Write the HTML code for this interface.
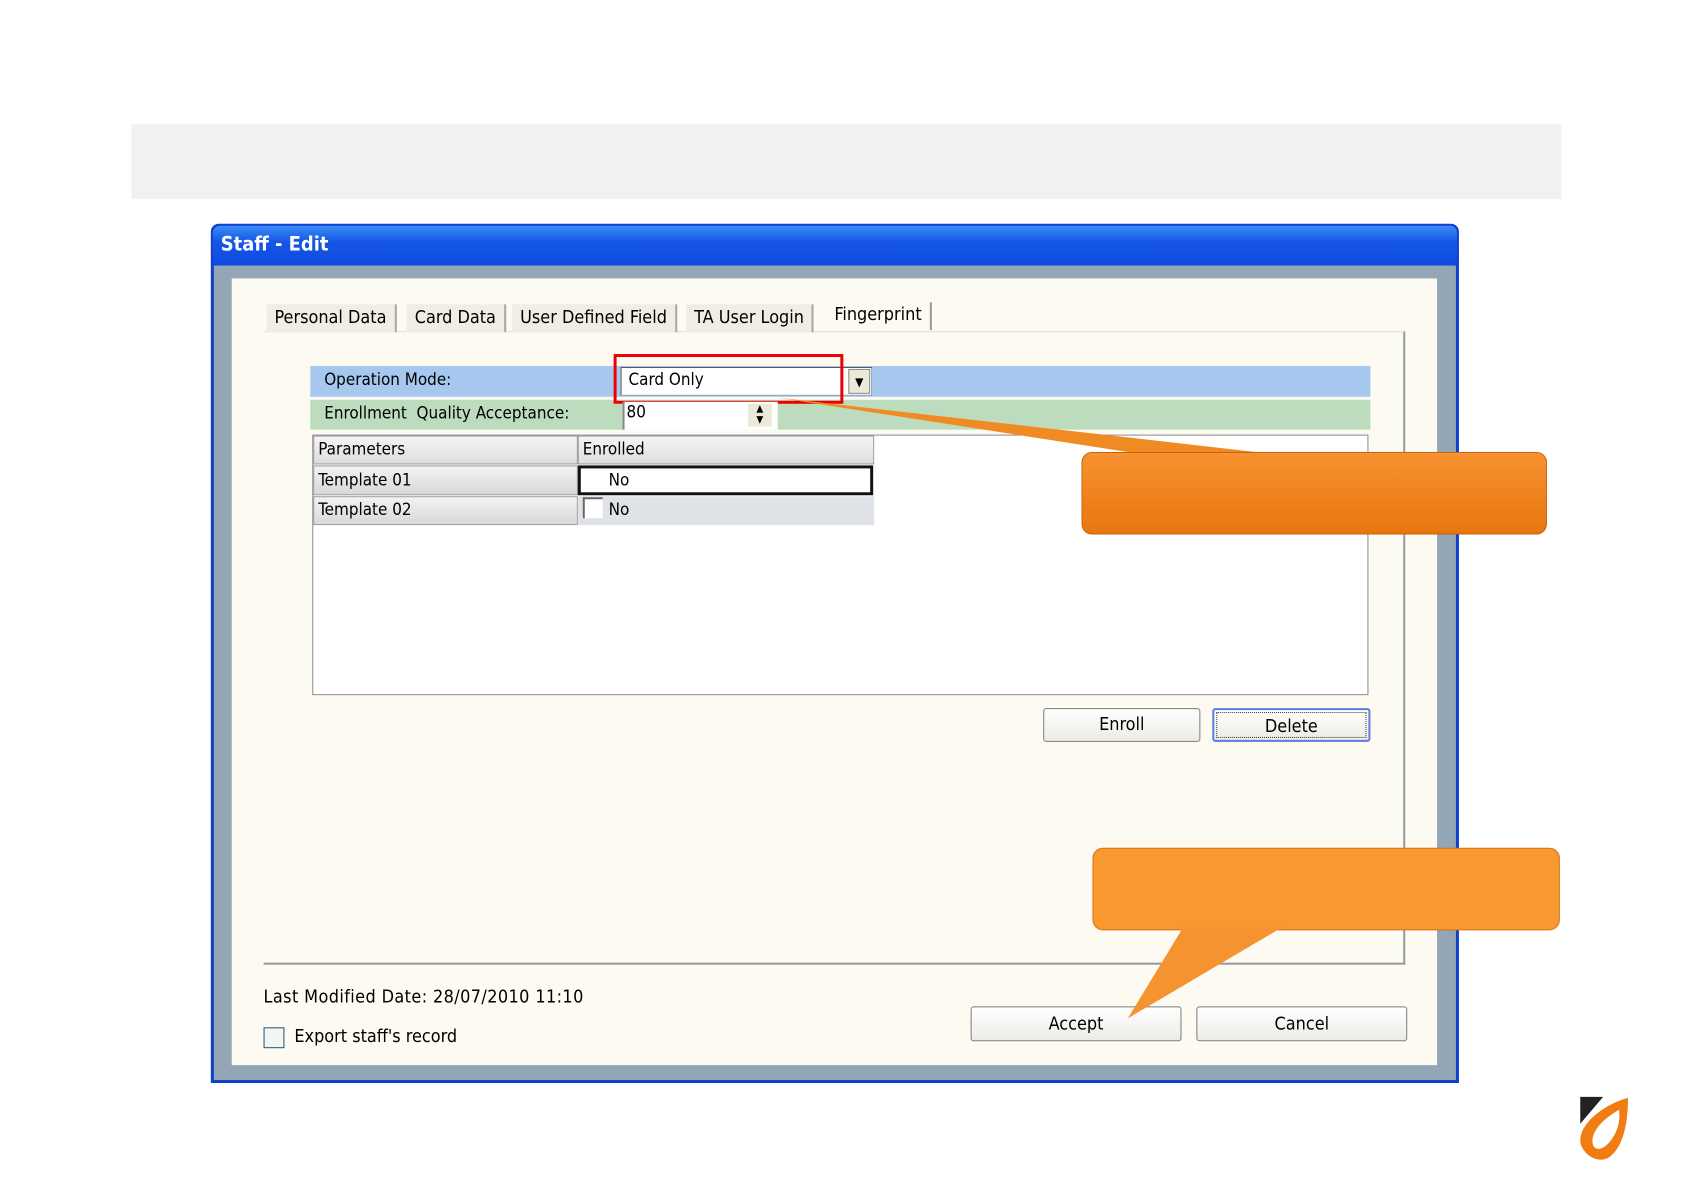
<!DOCTYPE html>
<html><head><meta charset="utf-8"><style>
*{margin:0;padding:0;box-sizing:border-box}
body{width:1684px;height:1191px;background:#fff;position:relative;overflow:hidden;font-family:"DejaVu Sans Condensed","Liberation Sans",sans-serif;font-size:17px;color:#000}
#w{position:absolute;left:0;top:0;width:1684px;height:1191px;transform:scale(0.9945);transform-origin:0 0}
.a{position:absolute}
.btn{position:absolute;border:1px solid #7a7a7a;border-radius:3px;background:linear-gradient(#fff,#ecebe6);text-align:center;font-size:18px}
.tab{position:absolute;top:306px;height:28px;font-size:18px;line-height:28px;border-right:2px solid #a8a8a0;padding:0 8px}
</style></head><body><div id="w">
<div class="a" style="left:132px;top:125px;width:1438px;height:75px;background:#f1f1f1"></div>
<div class="a" style="left:212px;top:225px;width:1255px;height:864px;background:#0f3fd0;border-radius:8px 8px 0 0"></div>
<div class="a" style="left:214px;top:227px;width:1251px;height:40px;background:linear-gradient(#3a8cf6,#1656e6 40%,#0d4be0);border-radius:7px 7px 0 0"></div>
<div class="a" style="left:222px;top:233px;color:#fff;font-weight:bold;font-size:20px">Staff - Edit</div>
<div class="a" style="left:215px;top:267px;width:1249px;height:819px;background:#93a6b6"></div>
<div class="a" style="left:233px;top:280px;width:1212px;height:791px;background:#fcfaf1"></div>
<div class="a" style="left:265px;top:333px;width:1148px;height:637px;border-right:2px solid #919b9c;border-bottom:2px solid #919b9c;border-top:1px solid #e0ddd0"></div>
<div class="tab" style="left:268px;background:#f0eee4">Personal Data</div>
<div class="tab" style="left:409px;background:#f0eee4">Card Data</div>
<div class="tab" style="left:515px;background:#f0eee4">User Defined Field</div>
<div class="tab" style="left:690px;background:#f0eee4">TA User Login</div>
<div class="tab" style="left:831px;top:304px;background:#fcfaf1;border-right:2px solid #919b9c;line-height:26px">Fingerprint</div>
<div class="a" style="left:312px;top:368px;width:1066px;height:31px;background:#a6c8ee"></div>
<div class="a" style="left:326px;top:372px">Operation Mode:</div>
<div class="a" style="left:312px;top:402px;width:1066px;height:30px;background:#bddcbd"></div>
<div class="a" style="left:326px;top:406px">Enrollment&nbsp; Quality Acceptance:</div>
<div class="a" style="left:624px;top:369px;width:253px;height:29px;background:#fff;border:1px solid #7f9db9;border-top-color:#555;border-left-color:#555"></div>
<div class="a" style="left:632px;top:372px">Card Only</div>
<div class="a" style="left:853px;top:371px;width:22px;height:25px;background:#ece9d8;border:1px solid #888;font-size:12px;text-align:center;line-height:24px">▼</div>
<div class="a" style="left:617px;top:356px;width:231px;height:50px;border:3px solid #e00"></div>
<div class="a" style="left:626px;top:404px;width:156px;height:28px;background:#fff;border-left:2px solid #888"></div>
<div class="a" style="left:630px;top:405px">80</div>
<div class="a" style="left:752px;top:406px;width:24px;height:23px;background:#ece9d8;font-size:10px;line-height:11px;text-align:center">▲<br>▼</div>
<div class="a" style="left:314px;top:437px;width:1062px;height:262px;background:#fff;border:1px solid #8a8a8a"></div>
<div class="a" style="left:315px;top:438px;width:266px;height:29px;background:linear-gradient(#f5f5f5,#ddd);border:1px solid #999"></div>
<div class="a" style="left:320px;top:442px">Parameters</div>
<div class="a" style="left:581px;top:438px;width:298px;height:29px;background:linear-gradient(#f5f5f5,#ddd);border:1px solid #999"></div>
<div class="a" style="left:586px;top:442px">Enrolled</div>
<div class="a" style="left:315px;top:468px;width:266px;height:30px;background:linear-gradient(#f3f3f3,#d8d8d8);border:1px solid #999"></div>
<div class="a" style="left:320px;top:473px">Template 01</div>
<div class="a" style="left:581px;top:468px;width:297px;height:30px;background:#fff;border:3px solid #111"></div>
<div class="a" style="left:612px;top:473px">No</div>
<div class="a" style="left:315px;top:499px;width:266px;height:29px;background:linear-gradient(#f3f3f3,#d8d8d8);border:1px solid #999"></div>
<div class="a" style="left:320px;top:503px">Template 02</div>
<div class="a" style="left:581px;top:499px;width:298px;height:29px;background:#dfe3e8"></div>
<div class="a" style="left:586px;top:500px;width:20px;height:21px;background:#fff;border-left:2px solid #666;border-top:2px solid #666"></div>
<div class="a" style="left:612px;top:503px">No</div>
<div class="btn" style="left:1049px;top:712px;width:158px;height:34px;line-height:32px">Enroll</div>
<div class="btn" style="left:1219px;top:712px;width:159px;height:34px;line-height:28px;border:2px solid #5a7edc"><div style="margin:2px;border:1px dotted #333;height:26px">Delete</div></div>
<div class="a" style="left:265px;top:992px;font-size:18px;letter-spacing:0.4px">Last Modified Date: 28/07/2010 11:10</div>
<div class="a" style="left:265px;top:1033px;width:21px;height:21px;border:1px solid #1c5180;background:#f4f4f0"></div>
<div class="a" style="left:296px;top:1032px;font-size:18px">Export staff's record</div>
<div class="btn" style="left:976px;top:1012px;width:212px;height:35px;line-height:33px">Accept</div>
<div class="btn" style="left:1203px;top:1012px;width:212px;height:35px;line-height:33px">Cancel</div>
<svg class="a" style="left:0;top:0" width="1684" height="1191">
<defs><linearGradient id="g1" x1="0" y1="0" x2="0" y2="1"><stop offset="0" stop-color="#f79230"/><stop offset="1" stop-color="#e8760f"/></linearGradient></defs>
<polygon points="783,400 1150,457 1285,457" fill="#f08a22"/>
<rect x="1088" y="455" width="467" height="82" rx="10" fill="url(#g1)" stroke="#c8620a" stroke-width="1"/>
<rect x="1099" y="853" width="469" height="82" rx="10" fill="#f8982f" stroke="#d27018" stroke-width="1"/>
<polygon points="1134,1024 1190,932 1290,932" fill="#f59330"/>
<path d="M1589 1103 L1612 1103 L1589 1130 Z" fill="#222"/>
<path d="M1637 1104 C1608 1112 1584 1135 1590 1152 C1596 1166 1612 1170 1620 1162 C1632 1152 1637 1130 1637 1104 Z M1628 1116 C1610 1126 1598 1140 1602 1152 C1607 1160 1618 1152 1624 1140 C1628 1132 1629 1124 1628 1116 Z" fill="#f07c12" fill-rule="evenodd"/>
</svg>
</div></body></html>
